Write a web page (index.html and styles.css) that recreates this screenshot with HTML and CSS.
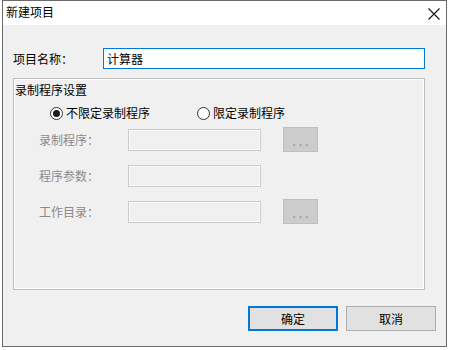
FILE: index.html
```html
<!DOCTYPE html>
<html>
<head>
<meta charset="utf-8">
<link rel="stylesheet" href="styles.css">
</head>
<body>
<div class="window">
  <div class="titlebar">
    <span class="title">新建项目</span>
    <svg class="close" width="12" height="12" viewBox="0 0 12 12"><path d="M0.5 0.5 L11.5 11.5 M11.5 0.5 L0.5 11.5" stroke="#111" stroke-width="1.1" fill="none"/></svg>
  </div>
  <div class="content">
    <div class="name-row">
      <span class="name-label">项目名称：</span>
      <div class="name-input">计算器</div>
    </div>
    <div class="group">
      <div class="group-title">录制程序设置</div>
      <div class="radio-row">
        <span class="radio-item"><span class="radio checked"><span class="dot"></span></span><span>不限定录制程序</span></span>
        <span class="radio-item"><span class="radio"></span><span>限定录制程序</span></span>
      </div>
      <div class="field-row">
        <span class="field-label">录制程序：</span>
        <span class="field-input"></span>
        <span class="browse">...</span>
      </div>
      <div class="field-row">
        <span class="field-label">程序参数：</span>
        <span class="field-input"></span>
      </div>
      <div class="field-row">
        <span class="field-label">工作目录：</span>
        <span class="field-input"></span>
        <span class="browse">...</span>
      </div>
    </div>
    <div class="buttons">
      <button class="btn default">确定</button>
      <button class="btn">取消</button>
    </div>
  </div>
</div>
</body>
</html>
```
FILE: styles.css
```css
html, body {
  margin: 0;
  padding: 0;
  background: #ffffff;
  font-family: "Noto Sans CJK SC", "Noto Sans", sans-serif;
  font-size: 12px;
  color: #000;
}
.window {
  margin-left: 2px;
  width: 445px;
  height: 347px;
  box-sizing: border-box;
  border: 1px solid #6a6a6a;
  background: #f0f0f0;
  display: flex;
  flex-direction: column;
}
.titlebar {
  height: 24px;
  flex: none;
  background: #ffffff;
  display: flex;
  align-items: center;
  justify-content: space-between;
  padding: 0 6px 0 3px;
}
.title {
  line-height: 16px;
  margin-top: -2px;
}
.close {
  display: block;
  margin-top: 1px;
}
.content {
  flex: 1;
  padding: 23px 10px 0 10px;
  display: flex;
  flex-direction: column;
}
.name-row {
  display: flex;
  align-items: center;
}
.name-label {
  width: 90px;
  line-height: 16px;
}
.name-input {
  width: 322px;
  height: 21px;
  box-sizing: border-box;
  border: 1px solid #0078d7;
  background: #fff;
  padding-left: 3px;
  line-height: 19px;
}
.group {
  margin-top: 9px;
  width: 412px;
  height: 212px;
  box-sizing: border-box;
  border: 1px solid #bcbcbc;
  box-shadow: inset 0 0 0 1px #ffffff;
  padding: 3px 0 0 1px;
  display: flex;
  flex-direction: column;
}
.group-title {
  line-height: 16px;
}
.radio-row {
  margin-top: 7px;
  display: flex;
  padding-left: 35px;
  line-height: 16px;
}
.radio-item {
  display: flex;
  align-items: center;
  width: 147px;
}
.radio {
  width: 13px;
  height: 13px;
  box-sizing: border-box;
  border: 1px solid #333333;
  border-radius: 50%;
  background: #fff;
  margin-right: 3px;
  display: flex;
  align-items: center;
  justify-content: center;
}
.dot {
  width: 7px;
  height: 7px;
  border-radius: 50%;
  background: #1a1a1a;
}
.field-row {
  margin-top: 6px;
  height: 25px;
  display: flex;
  align-items: center;
  padding-left: 24px;
}
.field-row + .field-row {
  margin-top: 11px;
}
.field-label {
  width: 89px;
  color: #8a8a8a;
  line-height: 16px;
}
.field-input {
  width: 133px;
  height: 22px;
  box-sizing: border-box;
  border: 1px solid #cccccc;
  box-shadow: inset 0 0 0 1px #fafafa;
  background: #f0f0f0;
}
.browse {
  margin-left: 22px;
  width: 35px;
  height: 25px;
  box-sizing: border-box;
  border: 1px solid #bfbfbf;
  background: #cccccc;
  color: #8c8c8c;
  font-size: 12px;
  letter-spacing: 3px;
  text-align: center;
  line-height: 26px;
  padding-left: 3px;
}
.buttons {
  margin-top: 16px;
  display: flex;
  justify-content: flex-end;
  gap: 8px;
}
.btn {
  width: 90px;
  height: 25px;
  box-sizing: border-box;
  border: 1px solid #adadad;
  background: #e1e1e1;
  font-family: "Noto Sans CJK SC", "Noto Sans", sans-serif;
  font-size: 12px;
  color: #000;
  padding: 0;
  margin: 0;
}
.btn.default {
  border: 2px solid #0078d7;
}
```
